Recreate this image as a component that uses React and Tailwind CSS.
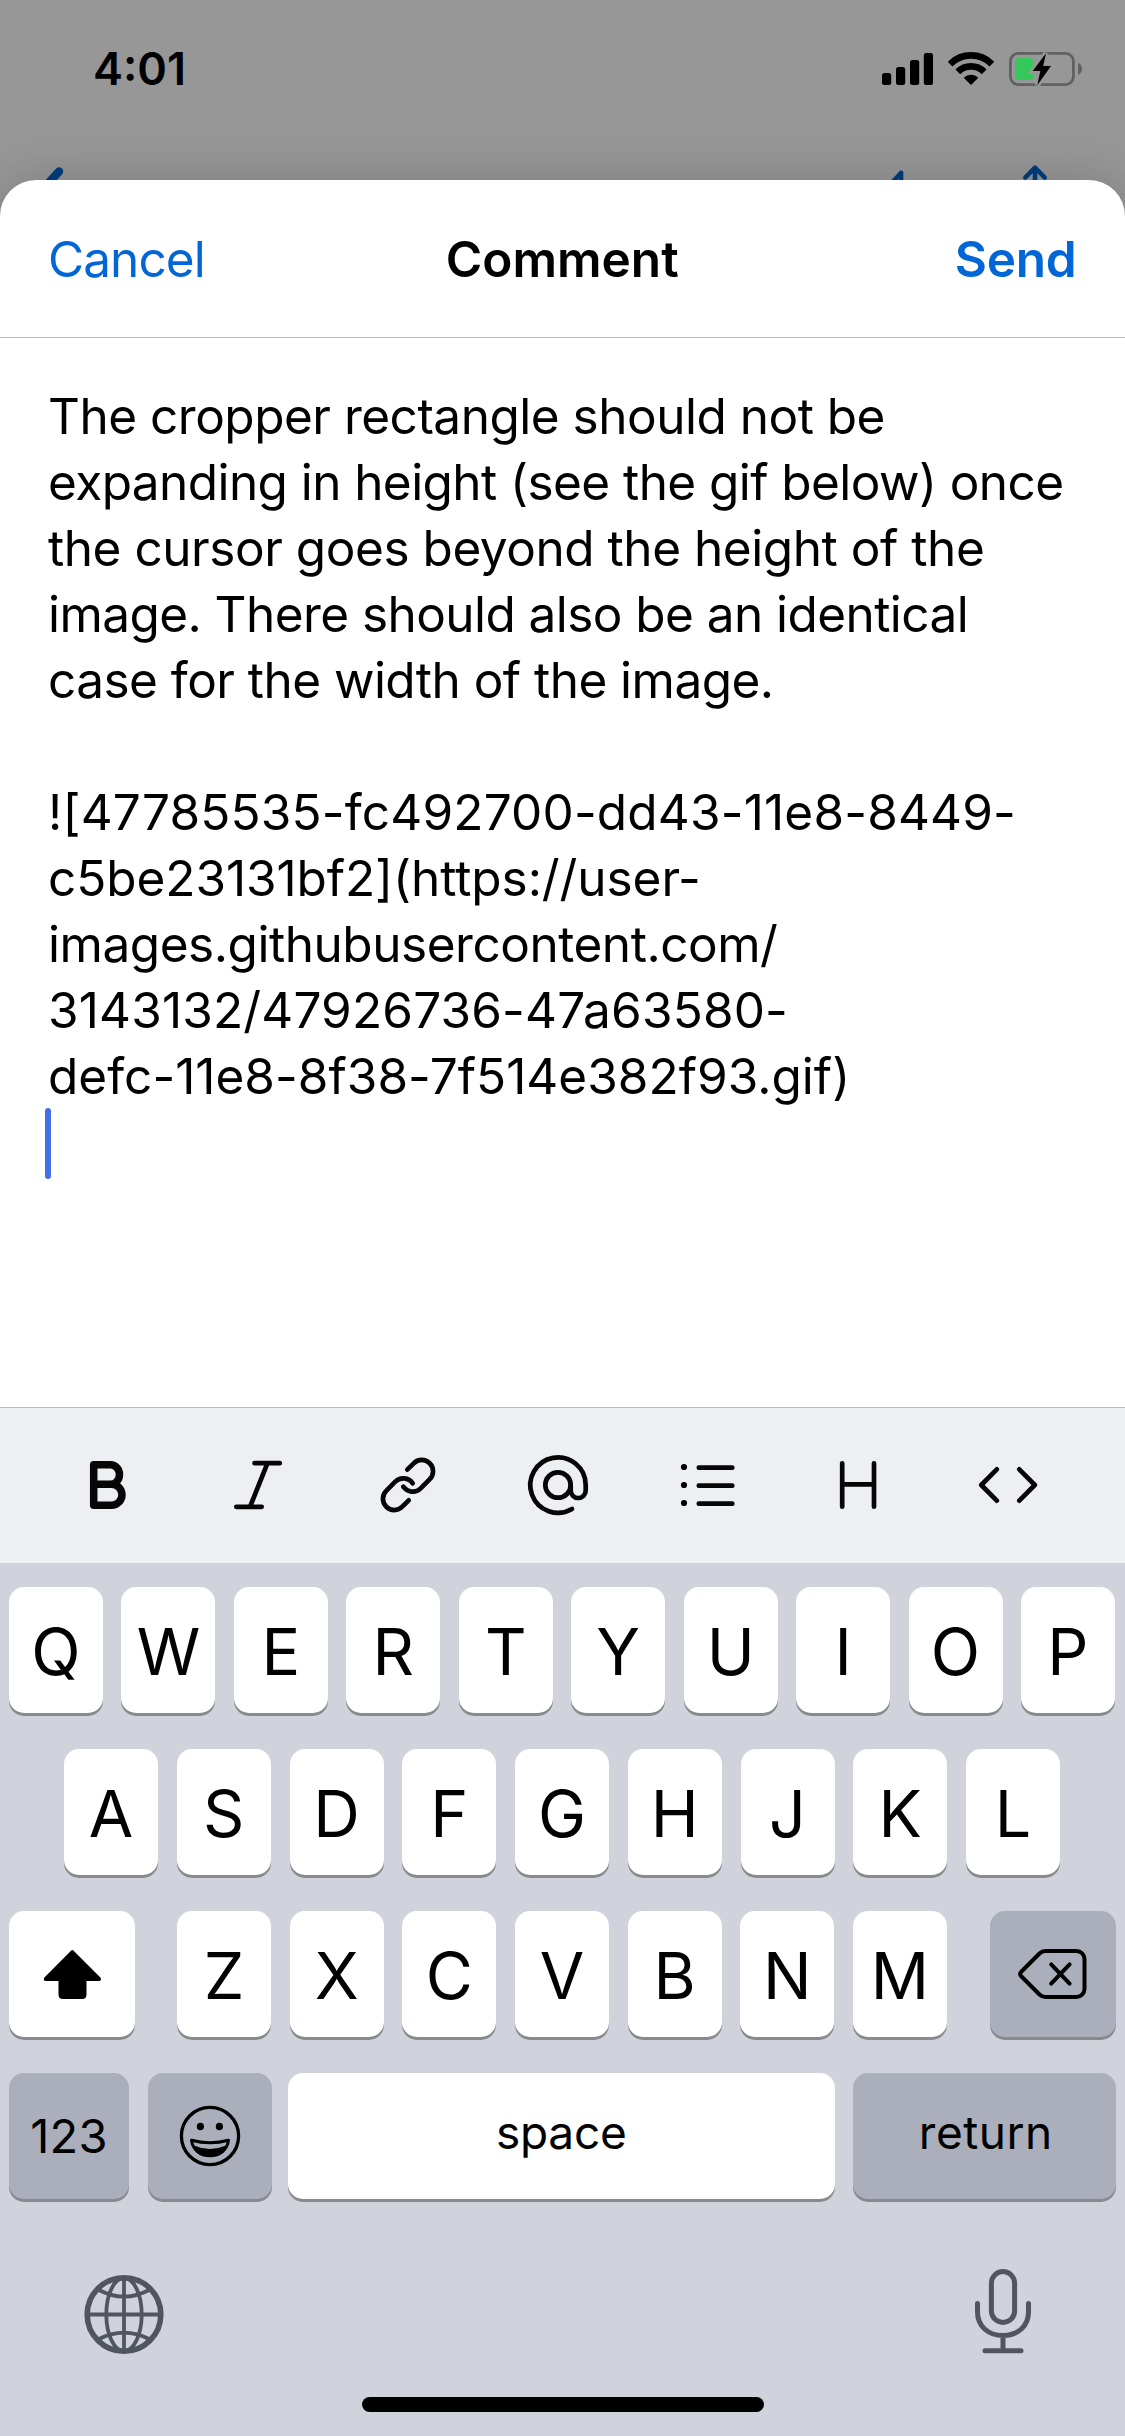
import React from "react";

const BODY_LINES = [
  ["The cropper rectangle should not be", "tracking-[-0.49px]"],
  ["expanding in height (see the gif below) once", "tracking-[-0.57px]"],
  ["the cursor goes beyond the height of the", "tracking-[-0.45px]"],
  ["image. There should also be an identical", "tracking-[-0.56px]"],
  ["case for the width of the image.", "tracking-[-0.53px]"],
  ["\u00a0", ""],
  ["![47785535-fc492700-dd43-11e8-8449-", "tracking-[0.18px]"],
  ["c5be23131bf2](https://user-", "tracking-[-0.07px]"],
  ["images.githubusercontent.com/", "tracking-[-0.46px]"],
  ["3143132/47926736-47a63580-", "tracking-[0.16px]"],
  ["defc-11e8-8f38-7f514e382f93.gif)", "tracking-[0.02px]"],
];

function StatusBar() {
  return (
    <div className="flex h-[38px] items-center justify-between pl-[93px] pr-[41px]">
      <span className="text-[45px] leading-[38px] font-semibold">4:01</span>
      <div className="flex">
        <svg className="mr-[15px]" width="51" height="38" viewBox="0 0 51 38">
          <rect x="0" y="23" width="9.2" height="12" rx="2.5" />
          <rect x="14" y="17" width="9.2" height="18" rx="2.5" />
          <rect x="28" y="10" width="9.2" height="25" rx="2.5" />
          <rect x="41.8" y="3" width="9.2" height="32" rx="2.5" />
        </svg>
        <svg className="mr-[14px]" width="46" height="38" viewBox="0 -2 46 38">
          <path d="M2.1 12.1A29.6 29.6 0 0 1 43.9 12.1M9.85 19.85A18.6 18.6 0 0 1 36.15 19.85" fill="none" stroke="#000" strokeWidth="6.8" />
          <path d="M23 33 15.7 25.7A10.3 10.3 0 0 1 30.3 25.7Z" />
        </svg>
        <svg width="76" height="38" viewBox="0 0 76 38">
          <rect x="2.4" y="3.4" width="63" height="31.2" rx="8" fill="none" stroke="#616161" strokeWidth="2.8" />
          <path d="M70 12.7Q74 14.5 74 18.8T70 25Z" fill="#616161" />
          <rect x="7" y="8" width="18.3" height="22" rx="4" fill="#34c759" />
          <path d="M38 3.3 35.2 16H43L29.3 35.3 32.3 21H24.7Z" fill="#979797" stroke="#979797" strokeWidth="5" />
          <path d="M38 3.3 35.2 16H43L29.3 35.3 32.3 21H24.7Z" />
        </svg>
      </div>
    </div>
  );
}

function BackdropNav() {
  return (
    <svg className="mt-[72px] block" width="1125" height="56" viewBox="0 160 1125 56" fill="none" stroke="#003d7e" strokeLinecap="round" strokeLinejoin="round">
      <path d="M59 171.5 40 192.5 59 212" strokeWidth="8.5" />
      <path d="M901 173 884 191" strokeWidth="4.6" />
      <path d="M901 173V200" strokeWidth="4.6" />
      <path d="M1035 168V210M1025.3 177.5 1035 167.7 1044.7 177.5" strokeWidth="4.6" />
    </svg>
  );
}

const TOOLS = [
  <path key="b" strokeWidth="7.5" d="M21.7 35.3V15.8H38.5a9 9.75 0 0 1 0 19.5H21.7V56.3H39.5a10.5 10.5 0 0 0 0-21" />,
  <path key="i" d="M32.5 14.2H57.8M14.3 57.8H39.7M45.5 14.2 28 57.8" />,
  <g key="l">
    <path d="M35.3 20.7 41.7 14.3A11.3 11.3 0 0 1 57.8 30.2L48.7 39.4A11.5 11.5 0 0 1 31.3 37.7" />
    <path transform="rotate(180 36 36)" d="M35.3 20.7 41.7 14.3A11.3 11.3 0 0 1 57.8 30.2L48.7 39.4A11.5 11.5 0 0 1 31.3 37.7" />
  </g>,
  <g key="a">
    <circle cx="36" cy="36" r="12.7" />
    <path d="M50 60A27.7 27.7 0 1 1 63.7 36V41.5A7.5 7.5 0 0 1 48.7 41.5V36" />
  </g>,
  <g key="u">
    <path d="M26.8 18.7H60.3M26.8 36.7H60.3M26.8 54.7H60.3" />
    <g fill="#000" stroke="none">
      <circle cx="12" cy="18" r="3.1" />
      <circle cx="12" cy="36" r="3.1" />
      <circle cx="12" cy="54" r="3.1" />
    </g>
  </g>,
  <path key="h" d="M20.2 14.3V57.7M52 14.3V57.7M20.2 35.3H52" />,
  <path key="c" d="M24.8 20.3 9.3 36 24.8 51.7M47.3 20.3 62.8 36 47.3 51.7" />,
];

function Toolbar() {
  return (
    <div className="flex h-[156px] border-t border-[#b9bbc1] bg-[#eeeff3] pl-[33px] pt-[41px]">
      {TOOLS.map((icon, i) => (
        <div key={i} className="flex w-[150px] justify-center">
          <svg width="72" height="72" viewBox="0 0 72 72" fill="none" stroke="#060606" strokeWidth="4.7" strokeLinecap="round" strokeLinejoin="round">
            {icon}
          </svg>
        </div>
      ))}
    </div>
  );
}

function Key({ children, className }) {
  return (
    <div className={"flex h-[126px] items-center justify-center rounded-[15px] shadow-[0_3px_0_#898a8d] " + className}>
      {children}
    </div>
  );
}

function LetterKeys({ letters }) {
  return letters.split("").map((l) => (
    <Key key={l} className="w-[94px] bg-white pt-[4px] text-[64.5px] leading-none">
      {l}
    </Key>
  ));
}

function Keyboard() {
  return (
    <div className="flex h-[873px] flex-col bg-[#d0d3dc] pt-[24px]">
      <div className="flex flex-col gap-[36px]">
        <div className="flex justify-between pl-[9px] pr-[10px]">
          <LetterKeys letters="QWERTYUIOP" />
        </div>
        <div className="flex justify-between pl-[64px] pr-[65px]">
          <LetterKeys letters="ASDFGHJKL" />
        </div>
        <div className="flex px-[9px]">
          <Key className="mr-[42px] w-[126px] bg-white">
            <svg width="60" height="54" viewBox="0 0 60 54" stroke="#000" strokeWidth="3" strokeLinejoin="round">
              <path d="M30.3 4.5 57.3 31.5Q57.8 32.5 57 32.5H43V47.5Q43 50.5 40 50.5H21Q18 50.5 18 47.5V32.5H3.8Q3 32.5 3.5 31.5Z" />
            </svg>
          </Key>
          <div className="mr-auto flex w-[770px] justify-between">
            <LetterKeys letters="ZXCVBNM" />
          </div>
          <Key className="w-[126px] bg-[#abafbb]">
            <svg width="72" height="54" viewBox="0 0 72 54" fill="none" stroke="#000" strokeWidth="4" strokeLinecap="round" strokeLinejoin="round">
              <path d="M28.5 4H59.5A8 8 0 0 1 67.5 12V42A8 8 0 0 1 59.5 50H28.5Q25 50 22.5 47.5L4 29Q2.2 27 4 25L22.5 6.5Q25 4 28.5 4Z" />
              <path d="M34.2 17.4 52.6 36.6M52.6 17.4 34.2 36.6" />
            </svg>
          </Key>
        </div>
        <div className="flex pl-[9px] pr-[9.5px]">
          <Key className="mr-[19px] w-[120px] bg-[#abafbb] text-[47px] tracking-[0.3px]">123</Key>
          <Key className="mr-[16px] w-[124px] bg-[#abafbb]">
            <svg width="62" height="62" viewBox="-31 -31 62 62">
              <circle r="28.6" fill="none" stroke="#000" strokeWidth="3.3" />
              <ellipse cx="-9.6" cy="-9.5" rx="3.6" ry="3.8" />
              <ellipse cx="9.4" cy="-9.5" rx="3.6" ry="3.8" />
              <path d="M-18.5 4.2Q0 9.2 18.5 4.2C17.5 13.5 10 19.8 0 19.8S-17.5 13.5-18.5 4.2Z" fill="none" stroke="#000" strokeWidth="3" strokeLinejoin="round" />
              <path d="M-16 9.5Q0 16.5 16 9.5Q11 20 0 20T-16 9.5Z" />
            </svg>
          </Key>
          <Key className="mr-[18.5px] w-[546.5px] bg-white pb-[7px] text-[46px] tracking-[-0.25px]">space</Key>
          <Key className="flex-1 bg-[#abafbb] pb-[7px] pl-[3px] text-[46px] tracking-[0.5px]">return</Key>
        </div>
      </div>
      <div className="mt-[67px] flex justify-between pl-[81.5px] pr-[82px]">
        <svg width="84" height="92" viewBox="-42 -48.5 84 92" fill="none" stroke="#51555e" strokeWidth="3.8">
          <circle r="36.8" strokeWidth="5.6" />
          <ellipse rx="17.7" ry="36.5" />
          <path d="M0-37V37M-37 0H37M-26-25Q0-10.8 26-25M-26 25Q0 11.2 26 25" />
        </svg>
        <svg width="80" height="92" viewBox="-40 0 80 92" fill="none" stroke="#51555e" strokeWidth="5" strokeLinecap="round">
          <rect x="-11.6" y="5.5" width="23.2" height="51" rx="11.6" />
          <path d="M-25.5 37.5V46C-25.5 60-15 69.5 0 69.5S25.5 60 25.5 46V37.5M0 69.5V84M-18 84.8H18" />
        </svg>
      </div>
      <div className="mx-auto mt-auto mb-[24px] h-[15px] w-[402px] rounded-full bg-black" />
    </div>
  );
}

export default function App() {
  return (
    <div className="h-[2436px] w-[1125px] overflow-hidden bg-[#979797] font-['Inter',sans-serif] text-black">
      <div className="h-[216px] pt-[50px]">
        <StatusBar />
        <BackdropNav />
      </div>
      <div className="relative -mt-[36px] overflow-hidden rounded-t-[36px] bg-white shadow-[0_0_50px_rgba(0,0,0,0.18)]">
        <div className="grid h-[158px] grid-cols-3 items-center border-b border-[#b9babe] pl-[48px] pr-[48.5px] pt-[2px] text-[49.5px]">
          <span className="tracking-[-0.94px] text-[#0366d6]">Cancel</span>
          <span className="text-center font-semibold">Comment</span>
          <span className="text-right font-semibold tracking-[-0.2px] text-[#0366d6]">Send</span>
        </div>
        <div className="h-[1069px] pl-[48px] pt-[45px] text-[49.5px] leading-[66px]">
          {BODY_LINES.map(([text, tracking], i) => (
            <div key={i} className={"whitespace-nowrap " + tracking}>
              {text}
            </div>
          ))}
          <div className="-mt-px -ml-[3px] h-[71px] w-[6px] rounded-[3px] bg-[#446de8]" />
        </div>
        <Toolbar />
        <Keyboard />
      </div>
    </div>
  );
}
